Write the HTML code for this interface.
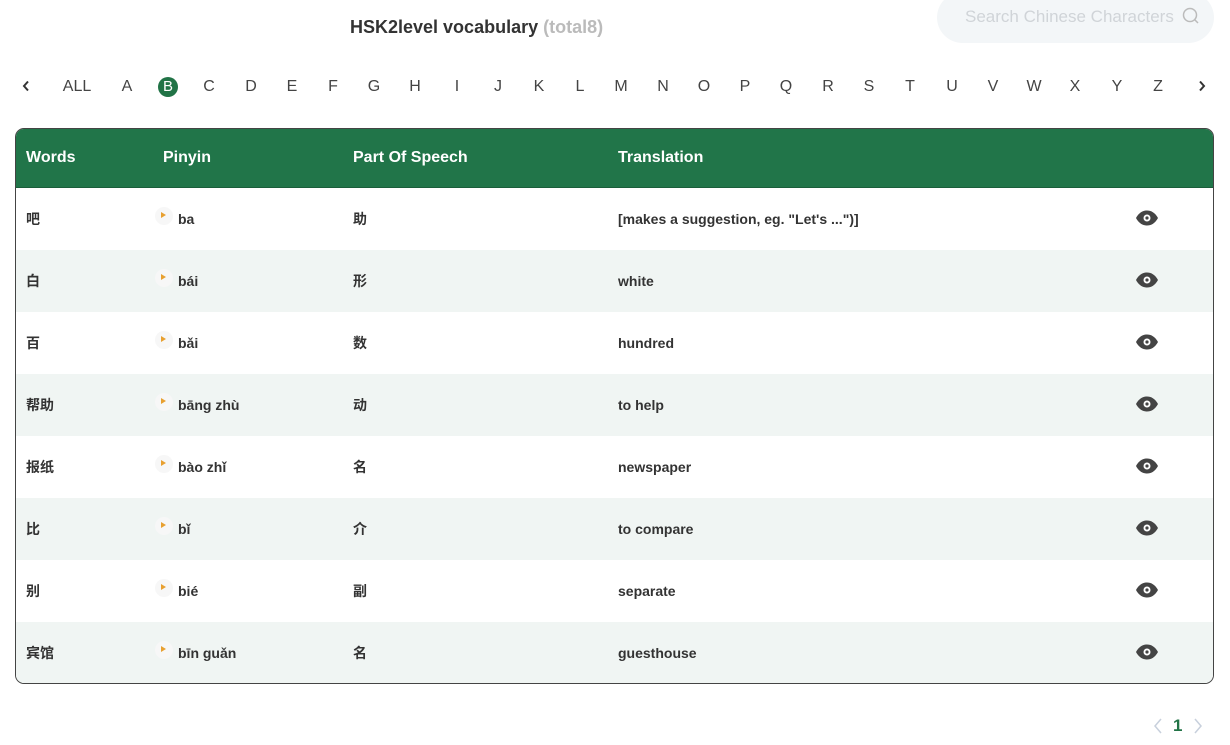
<!DOCTYPE html>
<html><head><meta charset="utf-8"><style>
*{margin:0;padding:0;box-sizing:border-box}
body{width:1230px;height:745px;background:#fff;font-family:"Liberation Sans","Noto Sans CJK SC",sans-serif;color:#333;position:relative;overflow:hidden}
.title{position:absolute;left:350px;top:17px;font-size:18px;font-weight:bold;color:#333}
.title span{color:#bbb}
.search{position:absolute;left:937px;top:-8px;width:277px;height:51px;border-radius:26px;background:#f3f6f8}
.search .t{position:absolute;left:28px;top:15px;font-size:17px;color:#d0d4d8;white-space:nowrap;width:218px;overflow:hidden}
.search svg{position:absolute;left:245px;top:15px}
.let{position:absolute;top:77px;font-size:16px;color:#444;transform:translateX(-50%);line-height:20px}
.b{position:absolute;left:158px;top:77px;width:20px;height:20px;border-radius:50%;background:#217346;color:#fff;text-align:center;font-size:15px;line-height:20px}
.tbl{position:absolute;left:15px;top:128px;width:1199px;height:556px;border:1px solid #444;border-radius:9px;overflow:hidden}
.hd{height:59px;background:#217549;color:#fff;font-weight:bold;font-size:16px;position:relative;border-bottom:1px solid #1a5e3a}
.row{height:62px;position:relative;font-size:14px;font-weight:bold;color:#333}
.row:nth-child(even){background:#f0f5f3}
.c{position:absolute;top:50%;transform:translateY(-50%);white-space:nowrap}
.play{position:absolute;left:139px;top:19px;width:18px;height:18px;border-radius:50%;background:#f7f7f7}
.play:after{content:"";position:absolute;left:6px;top:5px;border-left:5px solid #e8a030;border-top:3.5px solid transparent;border-bottom:3.5px solid transparent}
.eye{position:absolute;left:1119px;top:22px}
</style></head><body>
<div class="title">HSK2level vocabulary <span>(total8)</span></div>
<div class="search"><div class="t">Search Chinese Characters</div><svg width="18" height="18" viewBox="0 0 18 18"><circle cx="8" cy="8" r="6.5" fill="none" stroke="#bbb" stroke-width="1.5"/><path d="M12.5 12.5L16 16" stroke="#bbb" stroke-width="1.5"/></svg></div>
<svg style="position:absolute;left:22px;top:80px" width="8" height="12" viewBox="0 0 8 12"><path d="M6 1.5L2 6L6 10.5" fill="none" stroke="#333" stroke-width="2"/></svg>
<svg style="position:absolute;left:1198px;top:80px" width="8" height="12" viewBox="0 0 8 12"><path d="M2 1.5L6 6L2 10.5" fill="none" stroke="#333" stroke-width="2"/></svg>
<div class="let" style="left:77px">ALL</div>
<div class="let" style="left:127px">A</div>
<div class="b">B</div>
<div class="let" style="left:209px">C</div><div class="let" style="left:251px">D</div><div class="let" style="left:292px">E</div><div class="let" style="left:333px">F</div><div class="let" style="left:374px">G</div><div class="let" style="left:415px">H</div><div class="let" style="left:457px">I</div><div class="let" style="left:498px">J</div><div class="let" style="left:539px">K</div><div class="let" style="left:580px">L</div><div class="let" style="left:621px">M</div><div class="let" style="left:663px">N</div><div class="let" style="left:704px">O</div><div class="let" style="left:745px">P</div><div class="let" style="left:786px">Q</div><div class="let" style="left:828px">R</div><div class="let" style="left:869px">S</div><div class="let" style="left:910px">T</div><div class="let" style="left:952px">U</div><div class="let" style="left:993px">V</div><div class="let" style="left:1034px">W</div><div class="let" style="left:1075px">X</div><div class="let" style="left:1117px">Y</div><div class="let" style="left:1158px">Z</div>
<div class="tbl">
<div class="hd"><div class="c" style="left:10px">Words</div><div class="c" style="left:147px">Pinyin</div><div class="c" style="left:337px">Part Of Speech</div><div class="c" style="left:602px">Translation</div></div>
<div id="rows"></div>
</div>
<svg style="position:absolute;left:1152px;top:717px" width="12" height="18"><path d="M9 2L3 9L9 16" fill="none" stroke="#c8d0dc" stroke-width="1.5"/></svg>
<div style="position:absolute;left:1173px;top:716px;font-size:17px;font-weight:bold;color:#217346">1</div>
<svg style="position:absolute;left:1192px;top:717px" width="12" height="18"><path d="M3 2L9 9L3 16" fill="none" stroke="#c8d0dc" stroke-width="1.5"/></svg>
<script>
var d=[["吧","ba","助","[makes a suggestion, eg. \"Let's ...\")]"],["白","bái","形","white"],["百","bǎi","数","hundred"],["帮助","bāng zhù","动","to help"],["报纸","bào zhǐ","名","newspaper"],["比","bǐ","介","to compare"],["别","bié","副","separate"],["宾馆","bīn guǎn","名","guesthouse"]];
var h="";d.forEach(function(r){h+='<div class="row"><div class="c" style="left:10px">'+r[0]+'</div><div class="play"></div><div class="c" style="left:162px">'+r[1]+'</div><div class="c" style="left:337px">'+r[2]+'</div><div class="c" style="left:602px">'+r[3]+'</div><svg class="eye" width="24" height="16" viewBox="0 0 24 16"><path d="M1 8C4 2.5 8 0.5 12 0.5S20 2.5 23 8C20 13.5 16 15.5 12 15.5S4 13.5 1 8Z" fill="#444"/><circle cx="12" cy="8" r="3.5" fill="#fff"/><circle cx="12" cy="8" r="1.6" fill="#444"/></svg></div>';});
document.getElementById("rows").innerHTML=h;
</script>
</body></html>
